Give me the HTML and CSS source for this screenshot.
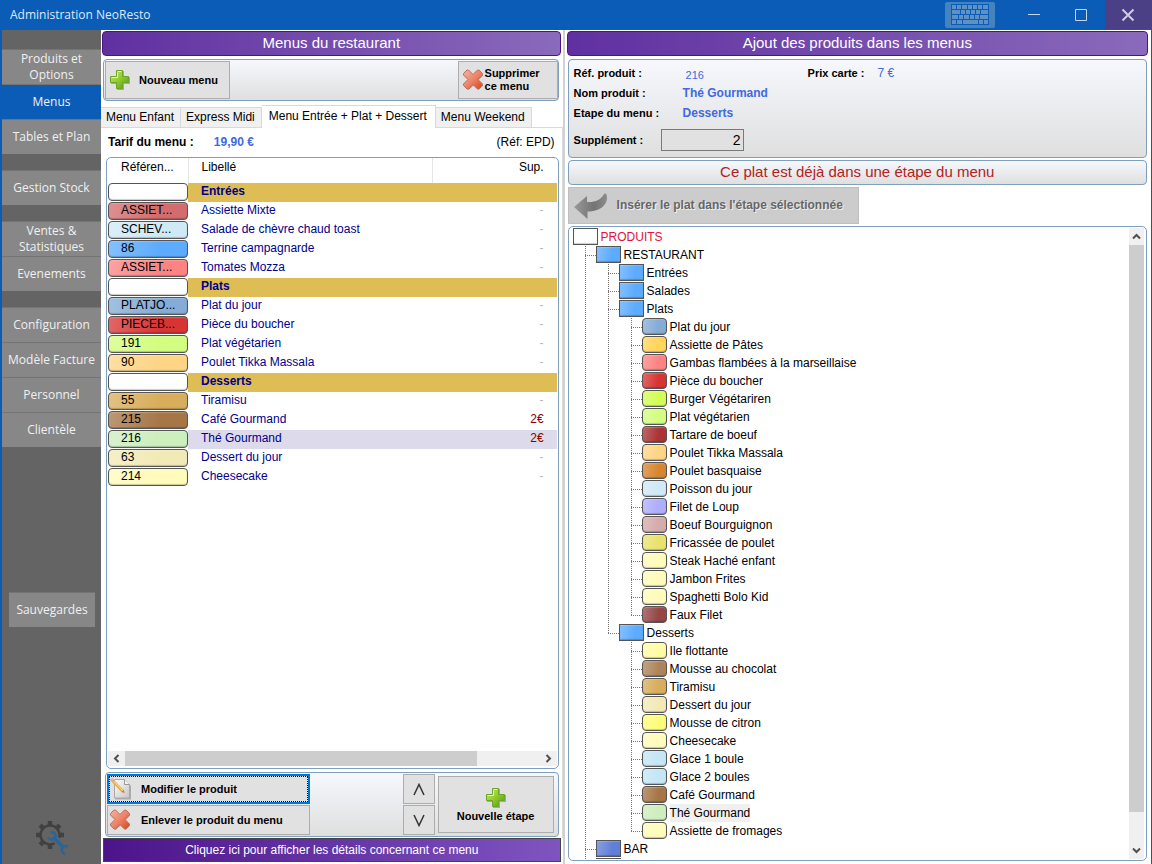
FILE: index.html
```html
<!DOCTYPE html>
<html lang="fr">
<head>
<meta charset="utf-8">
<title>Administration NeoResto</title>
<link rel="stylesheet" href="styles.css">
</head>
<body>
<svg class="defs" aria-hidden="true">
  <defs>
    <linearGradient id="green" x1="0" y1="0" x2="1" y2="1"><stop offset="0" stop-color="#cdea5e"/><stop offset=".5" stop-color="#8fcb2c"/><stop offset="1" stop-color="#4f9a10"/></linearGradient>
    <linearGradient id="red" x1="0" y1="0" x2="1" y2="1"><stop offset="0" stop-color="#f6b3a2"/><stop offset=".5" stop-color="#ee8368"/><stop offset="1" stop-color="#d9441c"/></linearGradient>
    <linearGradient id="grey" x1="0" y1="0" x2="1" y2="0"><stop offset="0" stop-color="#999"/><stop offset=".6" stop-color="#747474"/><stop offset="1" stop-color="#8c8c8c"/></linearGradient>
    <linearGradient id="paper" x1="0" y1="0" x2="1" y2="1"><stop offset="0" stop-color="#fdfdfd"/><stop offset="1" stop-color="#c6c6c6"/></linearGradient>
    <symbol id="plus" viewBox="0 0 22 22">
      <path d="M8 2h7v6h6v7h-6v6H8v-6H2V8h6z" fill="#777" opacity=".55"/>
      <path d="M7.500 1.500h6v6h6v6h-6v6h-6v-6h-6v-6h6z" fill="url(#green)" stroke="#6fa42c"/>
      <path d="M8.500 2.500h4M2.500 8.500h6v-5" fill="none" stroke="#e4f5a0"/>
    </symbol>
    <symbol id="cross" viewBox="0 0 22 22">
      <path d="M6.500 2.500L11.500 7l5-4.500 4.500 4-5 5 5 5-4.500 4.500-5-4.500-5 4.500L2 16.500l5-5-5-5z" fill="#555" opacity=".5"/>
      <path d="M5 1h1.500L11 5.500 15.500 1H17l3.500 3.500V6L16 10.500l4.500 4.500v1.500L17 20h-1.500L11 15.500 6.500 20H5l-3.500-3.500V15L6 10.500 1.500 6V4.500z" fill="url(#red)" stroke="#b9705e"/>
    </symbol>
  </defs>
</svg>

<header class="titlebar">
  <h1 class="titlebar-text">Administration NeoResto</h1>
  <button class="kbd" type="button" aria-label="Clavier">
    <svg width="50" height="26" viewBox="0 0 50 26">
      <rect width="50" height="26" rx="2" fill="#4483bd"/>
      <rect x="6" y="2" width="38" height="21" fill="#0a5cb7"/>
      <g stroke="#5e92c6" stroke-width="4" fill="none">
        <path d="M7 5h36" stroke-dasharray="4 1 4 1 5 1 4 1 4 1 4 1 6 9"/>
        <path d="M7 10h36" stroke-dasharray="8 1 4 1 4 1 4 1 4 1 7 9"/>
        <path d="M7 15h36" stroke-dasharray="6 1 4 1 5 1 4 1 4 1 8 9"/>
        <path d="M7 20h36" stroke-dasharray="4 1 5 1 15 1 4 1 5 9"/>
      </g>
    </svg>
  </button>
  <button class="winbtn" type="button" aria-label="Réduire"><svg width="14" height="14" viewBox="0 0 14 14"><path d="M1 6.500h12" stroke="#c3d6ec"/></svg></button>
  <button class="winbtn" type="button" aria-label="Agrandir"><svg width="14" height="14" viewBox="0 0 14 14"><path d="M1.500 1.500h11v11h-11z" fill="none" stroke="#c3d6ec"/></svg></button>
  <button class="winbtn close" type="button" aria-label="Fermer"><svg width="14" height="14" viewBox="0 0 14 14"><path d="M1.500 1.500l11 11M12.500 1.500l-11 11" stroke="#cfcbe0" stroke-width="2"/></svg></button>
</header>

<div class="window">
  <nav class="sidebar">
    <div class="nav-group">
      <button type="button">Produits et<br>Options</button>
      <button type="button" class="active">Menus</button>
      <button type="button">Tables et Plan</button>
    </div>
    <div class="nav-group"><button type="button">Gestion Stock</button></div>
    <div class="nav-group">
      <button type="button">Ventes &amp;<br>Statistiques</button>
      <button type="button">Evenements</button>
    </div>
    <div class="nav-group">
      <button type="button">Configuration</button>
      <button type="button">Modèle Facture</button>
      <button type="button">Personnel</button>
      <button type="button">Clientèle</button>
    </div>
    <div class="nav-group backup"><button type="button">Sauvegardes</button></div>
    <button class="gear" type="button" aria-label="Outils">
      <svg width="34" height="36" viewBox="0 0 34 36">
        <circle cx="14" cy="15" r="9.500" fill="none" stroke="#414141" stroke-width="2.500"/>
        <g stroke="#414141" stroke-width="4.500">
          <path d="M14 1v4M14 25v4M0 15h4M24 15h4M4.200 5.200L7 8M21 22l2.800 2.800M23.800 5.200L21 8M7 22l-2.800 2.800"/>
        </g>
        <path d="M17 16.500L29 29" stroke="#646464" stroke-width="7"/>
        <path d="M17 17l11 11" stroke="#2c6496" stroke-width="3.500"/>
        <path d="M14.500 12.500q4-1 5 2.500t-2 4q-4 1.500-5.500-1.500M32 26.500q-4-1.500-5.500 1t0 4.500 2.500 2.500" fill="none" stroke="#2c6496" stroke-width="2.500"/>
      </svg>
    </button>
  </nav>

  <main class="menus">
    <h2 class="banner">Menus du restaurant</h2>
    <div class="panel toolbar">
      <button class="btn new-menu" type="button"><svg width="22" height="22"><use href="#plus"/></svg><span>Nouveau menu</span></button>
      <button class="btn del-menu" type="button"><svg width="22" height="22"><use href="#cross"/></svg><span>Supprimer<br>ce menu</span></button>
    </div>
    <div class="tabs" role="tablist">
      <button type="button" role="tab">Menu Enfant</button>
      <button type="button" role="tab">Express Midi</button>
      <button type="button" role="tab" class="selected" aria-selected="true">Menu Entrée + Plat + Dessert</button>
      <button type="button" role="tab">Menu Weekend</button>
      <span class="tabs-rest"></span>
    </div>
    <section class="tabpage">
      <p class="tarif"><b>Tarif du menu :</b><b class="blue">19,90 €</b><span class="ref">(Réf: EPD)</span></p>
      <div class="listbox">
        <table class="list">
          <colgroup><col class="c-ref"><col><col class="c-sup"></colgroup>
          <thead><tr><th>Référen...</th><th>Libellé</th><th>Sup.</th></tr></thead>
          <tbody>
            <tr class="step"><td><span class="pill white"></span></td><td>Entrées</td><td></td></tr>
            <tr><td><span class="pill rose">ASSIET...</span></td><td>Assiette Mixte</td><td>-</td></tr>
            <tr><td><span class="pill ice">SCHEV...</span></td><td>Salade de chèvre chaud toast</td><td>-</td></tr>
            <tr><td><span class="pill sky">86</span></td><td>Terrine campagnarde</td><td>-</td></tr>
            <tr><td><span class="pill salmon">ASSIET...</span></td><td>Tomates Mozza</td><td>-</td></tr>
            <tr class="step"><td><span class="pill white"></span></td><td>Plats</td><td></td></tr>
            <tr><td><span class="pill steel">PLATJO...</span></td><td>Plat du jour</td><td>-</td></tr>
            <tr><td><span class="pill red">PIECEB...</span></td><td>Pièce du boucher</td><td>-</td></tr>
            <tr><td><span class="pill lime">191</span></td><td>Plat végétarien</td><td>-</td></tr>
            <tr><td><span class="pill peach">90</span></td><td>Poulet Tikka Massala</td><td>-</td></tr>
            <tr class="step"><td><span class="pill white"></span></td><td>Desserts</td><td></td></tr>
            <tr><td><span class="pill caramel">55</span></td><td>Tiramisu</td><td>-</td></tr>
            <tr><td><span class="pill coffee">215</span></td><td>Café Gourmand</td><td class="extra">2€</td></tr>
            <tr class="current"><td><span class="pill mint">216</span></td><td>Thé Gourmand</td><td class="extra">2€</td></tr>
            <tr><td><span class="pill cream">63</span></td><td>Dessert du jour</td><td>-</td></tr>
            <tr><td><span class="pill vanilla">214</span></td><td>Cheesecake</td><td>-</td></tr>
          </tbody>
        </table>
        <div class="hscroll">
          <button type="button" aria-label="Défiler à gauche"><svg width="9" height="9" viewBox="0 0 9 9"><path d="M6.500 1L3 4.500 6.500 8" fill="none" stroke="#505050" stroke-width="2"/></svg></button>
          <div class="track"><div class="thumb"></div></div>
          <button type="button" aria-label="Défiler à droite"><svg width="9" height="9" viewBox="0 0 9 9"><path d="M2.500 1L6 4.500 2.500 8" fill="none" stroke="#505050" stroke-width="2"/></svg></button>
        </div>
      </div>
      <div class="panel actions">
        <div class="stack edit">
          <button class="btn focus" type="button">
            <svg width="22" height="22" viewBox="0 0 22 22"><path d="M5 3h11l5 5v13.500H5z" fill="#777" opacity=".5"/><path d="M4.500 1.500h10l5 5v13.500h-15z" fill="url(#paper)" stroke="#a8a8a8"/><path d="M14.500 1.500v5h5" fill="#f4f4f4" stroke="#999"/><path d="M3 3l9.500 10" stroke="#e2b04a" stroke-width="3"/><path d="M3.500 3l9.500 10" stroke="#ffe07c"/><path d="M1 1l2.500 2.500" stroke="#e5a3a3" stroke-width="3"/><path d="M11.300 14l2.500-2.200.700 3.200z" fill="#c07a4a"/></svg>
            <span>Modifier le produit</span></button>
          <button class="btn" type="button"><svg width="22" height="22"><use href="#cross"/></svg><span>Enlever le produit du menu</span></button>
        </div>
        <div class="stack move">
          <button class="btn" type="button" aria-label="Monter"><svg width="12" height="13" viewBox="0 0 12 13"><path d="M1 12L6 1.500 11 12" fill="none" stroke="#333" stroke-width="1.500"/></svg></button>
          <button class="btn" type="button" aria-label="Descendre"><svg width="12" height="13" viewBox="0 0 12 13"><path d="M1 1l5 10.500L11 1" fill="none" stroke="#333" stroke-width="1.500"/></svg></button>
        </div>
        <button class="btn new-step" type="button"><svg width="22" height="22"><use href="#plus"/></svg><span>Nouvelle étape</span></button>
      </div>
    </section>
    <button class="details" type="button">Cliquez ici pour afficher les détails concernant ce menu</button>
  </main>

  <section class="products">
    <h2 class="banner">Ajout des produits dans les menus</h2>
    <div class="panel info">
      <dl>
        <dt>Réf. produit :</dt><dd class="num">216</dd><dt>Prix carte :</dt><dd class="price">7 €</dd>
        <dt>Nom produit :</dt><dd class="wide">Thé Gourmand</dd>
        <dt>Etape du menu :</dt><dd class="wide">Desserts</dd>
      </dl>
      <div class="supplement"><label for="sup">Supplément :</label><input id="sup" type="text" value="2"></div>
    </div>
    <p class="panel message">Ce plat est déjà dans une étape du menu</p>
    <button class="insert" type="button" disabled>
      <svg width="36" height="28" viewBox="0 0 36 28"><path d="M1 15L14 4v6C22 10.500 28 8 31 2l2-.500c2 4 1 9-2.500 12.500-4 4-10 5.500-16 5.500V27z" fill="url(#grey)"/></svg>
      <span>Insérer le plat dans l'étape sélectionnée</span>
    </button>
    <div class="treebox">
      <ul class="tree">
        <li><span class="node root"><i class="sw box white"></i>PRODUITS</span>
          <ul>
            <li><span class="node"><i class="sw box sky"></i>RESTAURANT</span>
              <ul>
                <li><span class="node"><i class="sw box sky"></i>Entrées</span></li>
                <li><span class="node"><i class="sw box sky"></i>Salades</span></li>
                <li><span class="node"><i class="sw box sky"></i>Plats</span>
                  <ul>
                    <li><span class="node"><i class="sw steel"></i>Plat du jour</span></li>
                    <li><span class="node"><i class="sw gold"></i>Assiette de Pâtes</span></li>
                    <li><span class="node"><i class="sw salmon"></i>Gambas flambées à la marseillaise</span></li>
                    <li><span class="node"><i class="sw red"></i>Pièce du boucher</span></li>
                    <li><span class="node"><i class="sw acid"></i>Burger Végétariren</span></li>
                    <li><span class="node"><i class="sw lime"></i>Plat végétarien</span></li>
                    <li><span class="node"><i class="sw brick"></i>Tartare de boeuf</span></li>
                    <li><span class="node"><i class="sw peach"></i>Poulet Tikka Massala</span></li>
                    <li><span class="node"><i class="sw orange"></i>Poulet basquaise</span></li>
                    <li><span class="node"><i class="sw ice"></i>Poisson du jour</span></li>
                    <li><span class="node"><i class="sw lilac"></i>Filet de Loup</span></li>
                    <li><span class="node"><i class="sw dusty"></i>Boeuf Bourguignon</span></li>
                    <li><span class="node"><i class="sw olive"></i>Fricassée de poulet</span></li>
                    <li><span class="node"><i class="sw vanilla"></i>Steak Haché enfant</span></li>
                    <li><span class="node"><i class="sw vanilla"></i>Jambon Frites</span></li>
                    <li><span class="node"><i class="sw vanilla"></i>Spaghetti Bolo Kid</span></li>
                    <li><span class="node"><i class="sw wine"></i>Faux Filet</span></li>
                  </ul>
                </li>
                <li><span class="node"><i class="sw box sky"></i>Desserts</span>
                  <ul>
                    <li><span class="node"><i class="sw butter"></i>Ile flottante</span></li>
                    <li><span class="node"><i class="sw cocoa"></i>Mousse au chocolat</span></li>
                    <li><span class="node"><i class="sw caramel"></i>Tiramisu</span></li>
                    <li><span class="node"><i class="sw cream"></i>Dessert du jour</span></li>
                    <li><span class="node"><i class="sw lemon"></i>Mousse de citron</span></li>
                    <li><span class="node"><i class="sw vanilla"></i>Cheesecake</span></li>
                    <li><span class="node"><i class="sw frost"></i>Glace 1 boule</span></li>
                    <li><span class="node"><i class="sw frost"></i>Glace 2 boules</span></li>
                    <li><span class="node"><i class="sw coffee"></i>Café Gourmand</span></li>
                    <li><span class="node"><i class="sw mint"></i><span class="picked">Thé Gourmand</span></span></li>
                    <li><span class="node"><i class="sw vanilla"></i>Assiette de fromages</span></li>
                  </ul>
                </li>
              </ul>
            </li>
            <li><span class="node"><i class="sw box indigo"></i>BAR</span></li>
            <li><span class="node"><i class="sw box indigo"></i></span></li>
          </ul>
        </li>
      </ul>
      <div class="vscroll">
        <button type="button" aria-label="Défiler vers le haut"><svg width="9" height="9" viewBox="0 0 9 9"><path d="M1 6.500L4.500 3 8 6.500" fill="none" stroke="#505050" stroke-width="2"/></svg></button>
        <div class="track"><div class="thumb"></div></div>
        <button type="button" aria-label="Défiler vers le bas"><svg width="9" height="9" viewBox="0 0 9 9"><path d="M1 2.500L4.500 6 8 2.500" fill="none" stroke="#505050" stroke-width="2"/></svg></button>
      </div>
    </div>
  </section>
</div>
</body>
</html>
```
FILE: styles.css
```css
* { box-sizing: border-box; }

body {
  margin: 0;
  height: 100vh;
  display: flex;
  flex-direction: column;
  overflow: hidden;
  font: 12px/15px "Liberation Sans", Arial, sans-serif;
  color: #000;
  background: #fff;
}

button { font: inherit; color: inherit; margin: 0; padding: 0; border: 0; background: none; }
h1, h2, p, dl, dd, ul { margin: 0; padding: 0; }
svg { display: block; flex: none; }
.defs { position: absolute; width: 0; height: 0; }

/* Title bar */
.titlebar { flex: none; display: flex; height: 30px; background: #0a5cb7; color: #dfe9f5; }
.titlebar-text { flex: 1; padding-left: 10px; font: 12px/30px "Open Sans", sans-serif; }
.kbd { margin-right: 16px; padding-top: 2px; display: flex; }
.winbtn { width: 47px; height: 29px; padding-right: 2px; display: flex; align-items: center; justify-content: center; }
.close { background: #4b4086; }

.window { flex: 1; min-height: 0; display: flex; border: solid #0a5cb7; border-width: 0 1px 0 2px; }

/* Sidebar */
.sidebar {
  flex: none; width: 99px; padding: 19px 0 8px;
  display: flex; flex-direction: column; gap: 16px;
  background: #646464; font: 12px/16px "Open Sans", sans-serif; color: #f0f0f0;
}
.nav-group button {
  display: block; width: 100%; height: 35px; padding: 0 0 1px;
  background: #878787; border-top: 1px solid #747474;
}
.nav-group .active { background: #0a5cb7; }
.backup { margin: 129px 6px 0 7px; }
.gear { margin: auto 0 0 34px; width: 34px; }

/* Shared parts */
.banner {
  flex: none; height: 25px; border: 1px solid #4a1582; border-radius: 4px;
  background: linear-gradient(90deg, #6030a0, #8a6abb);
  color: #fff; font-weight: normal; font-size: 15px; line-height: 22px; text-align: center;
}
.panel { flex: none; border: 1px solid #7f9fbf; border-radius: 4px; background: linear-gradient(#f6f8fd, #dfdfdf); }
.btn {
  display: flex; align-items: center; background: #e1e1e1; border: 1px solid #adadad;
  font-weight: bold; font-size: 11px; line-height: 13px; text-align: left;
}
.blue { color: #4169e1; }

/* Left column */
.menus { flex: 462; min-width: 0; display: flex; flex-direction: column; padding: 1px 0 2px; }
.menus > .banner { margin: 0 2px 0 1px; }
.toolbar { display: flex; justify-content: space-between; margin: 3px 4px 4px 2px; padding: 1px 0 1px 1px; }
.toolbar .btn { height: 38px; }
.new-menu { width: 125px; padding-left: 3px; gap: 8px; }
.del-menu { width: 100px; padding-left: 3px; gap: 1px; }

.tabs { flex: none; display: flex; align-items: flex-end; }
.tabs button {
  height: 21px; padding: 0 6px 0 5px; white-space: nowrap;
  background: #f0f0f0; border: 1px solid #d9d9d9; border-left-width: 0;
}
.tabs .selected { height: 23px; padding: 0 8px 2px 7px; background: #fff; border-bottom: 0; }
.tabs-rest { flex: 1; height: 1px; background: #d9d9d9; }

.tabpage { flex: 1; min-height: 0; display: flex; flex-direction: column; padding: 7px 3px 1px 4px; border-right: 1px solid #d9d9d9; }
.tarif { flex: none; display: flex; padding: 0 4px 7px 3px; }
.tarif .blue { margin-left: 20px; }
.ref { margin-left: auto; }

.listbox { flex: 1; min-height: 0; display: flex; flex-direction: column; padding: 0 1px 1px; border: 1px solid #7f9fbf; border-radius: 5px; margin-left: 1px; }
.list { width: 100%; table-layout: fixed; border-collapse: collapse; }
.c-ref { width: 80px; }
.c-sup { width: 124px; }
.list th { height: 25px; padding: 0 13px 6px; font-weight: normal; text-align: left; border-right: 1px solid #e5e5e5; }
.list th:last-child { text-align: right; border: 0; }
.list td { height: 19px; padding: 0 13px 2px; color: #00008b; }
.list td:first-child { padding: 0; color: #000; }
.list td:last-child { text-align: right; color: #b8b8b8; }
.list td.extra { color: #8b0000; }
.step td:not(:first-child) { background: #debd55; font-weight: bold; }
.current td:not(:first-child) { background: #dddbeb; }

.pill, .sw {
  background-image: linear-gradient(100deg, rgba(255,255,255,.25), rgba(255,255,255,0) 65%);
  border: 1px solid #555; border-radius: 4px;
  box-shadow: inset 0 -1px 1px rgba(0,0,0,.2), inset 0 1px 1px rgba(255,255,255,.2);
}
.pill { display: block; height: 18px; margin-bottom: 1px; padding-left: 12px; line-height: 14px; }

.white { background-color: #fff; }
.rose { background-color: #d36c6c; }
.ice { background-color: #cfe9f6; }
.sky { background-color: #5cabfe; }
.salmon { background-color: #fd8383; }
.steel { background-color: #84acd6; }
.red { background-color: #d83434; }
.lime { background-color: #d3fd80; }
.peach { background-color: #fed485; }
.caramel { background-color: #d8ad5b; }
.coffee { background-color: #a67647; }
.mint { background-color: #cdeebd; }
.cream { background-color: #f2eab6; }
.vanilla { background-color: #fefbbb; }
.gold { background-color: #ffd55a; }
.acid { background-color: #d2fd57; }
.brick { background-color: #ac3434; }
.orange { background-color: #d8852f; }
.lilac { background-color: #aeadfe; }
.dusty { background-color: #d5abab; }
.olive { background-color: #e8e36c; }
.wine { background-color: #964646; }
.butter { background-color: #fffca6; }
.cocoa { background-color: #ae855b; }
.lemon { background-color: #fffd78; }
.frost { background-color: #c4e6f5; }
.indigo { background-color: #607fd8; }

/* Scroll bars */
.hscroll, .vscroll { display: flex; background: #f0f0f0; }
.hscroll { margin-top: auto; height: 15px; margin-bottom: 1px; }
.hscroll button, .vscroll button { flex: none; width: 17px; height: 15px; display: flex; align-items: center; justify-content: center; }
.vscroll { flex: none; flex-direction: column; width: 15px; }
.vscroll button { width: 15px; height: 17px; }
.track { flex: 1; }
.thumb { background: #cdcdcd; }
.hscroll .thumb { width: 85%; height: 100%; }
.vscroll .thumb { width: 100%; height: 95%; }

.actions { display: flex; margin-top: 3px; padding: 1px 4px 1px 1px; }
.stack { display: flex; flex-direction: column; gap: 1px; }
.stack .btn { height: 30px; }
.edit .btn { width: 203px; padding-left: 1px; gap: 10px; }
.edit .focus { border: 2px solid #0078d7; outline: 1px dotted #000; outline-offset: -3px; padding-left: 1px; gap: 9px; }
.move { margin-left: auto; }
.move .btn { width: 32px; justify-content: center; }
.new-step { width: 116px; height: 57px; margin: 2px 0 0 3px; flex-direction: column; justify-content: center; gap: 1px; }

.details {
  flex: none; height: 24px; margin: 0 2px; border: 1px solid #444;
  background: linear-gradient(90deg, #4c148a, #7e55bf); color: #fff;
}

/* Right column */
.products { flex: 582; min-width: 0; display: flex; flex-direction: column; padding: 1px 3px 3px 2px; border-left: 2px solid #d2d2d2; }
.products > :not(.banner) { margin-left: 1px; margin-right: 1px; }
.products > .info { margin-top: 3px; padding: 3px 5px 6px; }
.info dl { display: grid; grid-template-columns: 109px 125px 70px 1fr; grid-auto-rows: 20px; line-height: 20px; }
.info dt, .supplement { font-weight: bold; font-size: 11px; }
.info dd { color: #4169e1; font-size: 12px; }
.info .wide { grid-column: 2 / -1; font-weight: bold; }
.info .num { padding: 2px 0 0 3px; font-size: 11px; }
.supplement { display: flex; align-items: center; margin-top: 6px; }
.supplement label { width: 87px; }
.supplement input {
  width: 83px; height: 22px; padding: 0 2px; border: 1px solid #7a7a7a; border-radius: 0;
  background: #e1e1e1; font: 14px "Liberation Sans", Arial, sans-serif; text-align: right;
}
.message { margin-top: 2px; height: 25px; color: #b22222; font-size: 15px; line-height: 22px; text-align: center; }
.insert {
  flex: none; align-self: flex-start; display: flex; align-items: center; gap: 8px;
  width: 291px; height: 37px; margin-top: 2px; padding-left: 4px;
  background: #ccc; border: 1px solid #bfbfbf;
  color: #666; font-weight: bold; text-shadow: 1px 1px #f0f0f0;
}

.treebox { flex: 1; min-height: 0; display: flex; margin-top: 2px; padding: 1px 2px 1px 4px; border: 1px solid #7f9fbf; border-radius: 5px; }
.tree { flex: 1; overflow: hidden; }
.tree, .tree ul { list-style: none; }
.tree ul { margin-left: 12px; }
.tree ul li {
  padding-left: 11px;
  background:
    repeating-linear-gradient(#777 0 1px, transparent 1px 2px) 0 0 / 1px 100% no-repeat,
    repeating-linear-gradient(90deg, #777 0 1px, transparent 1px 2px) 0 9px / 11px 1px no-repeat;
}
.tree ul li:last-child {
  background:
    repeating-linear-gradient(#777 0 1px, transparent 1px 2px) 0 0 / 1px 10px no-repeat,
    repeating-linear-gradient(90deg, #777 0 1px, transparent 1px 2px) 0 9px / 11px 1px no-repeat;
}
.node { display: flex; height: 18px; line-height: 18px; white-space: nowrap; }
.root { color: #dc143c; }
.sw { flex: none; width: 25px; height: 17px; margin-right: 3px; }
.box { border-radius: 0; }
.picked { background: #f0f0f0; height: 18px; }
```
